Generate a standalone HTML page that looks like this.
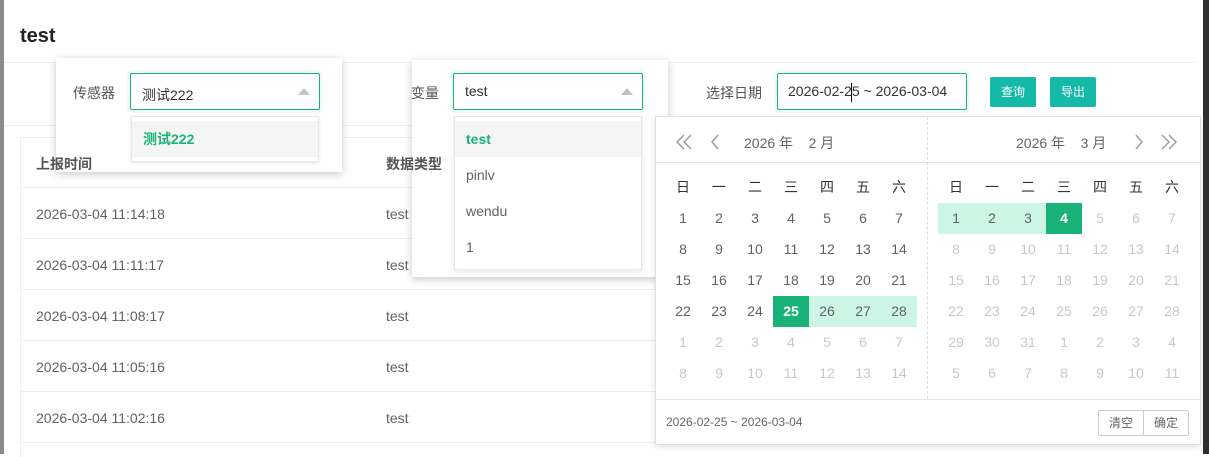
<!DOCTYPE html>
<html><head><meta charset="utf-8"><style>
*{box-sizing:border-box;margin:0;padding:0}
body{width:1209px;height:454px;overflow:hidden;background:#fff;font-family:"Liberation Sans","Noto Sans CJK SC",sans-serif;color:#606266;position:relative}
.a{position:absolute}
.t{font-size:14px;color:#606266;white-space:nowrap}
.shadow{background:#fff;box-shadow:0 2px 8px rgba(0,0,0,.22)}
.inp{border:1px solid #19b37a;background:#fff;box-shadow:0 0 0 3px #eefaf4;border-radius:2px}
.tri{position:absolute;width:0;height:0;border-left:6px solid transparent;border-right:6px solid transparent;border-bottom:7px solid #c0c4cc}
.dd{background:#fff;border:1px solid #e8e8e8;box-shadow:0 1px 4px rgba(0,0,0,.1)}
.it{position:absolute;left:0;right:0;height:36px;line-height:36px;padding-left:11px;font-size:14px;color:#606266}
.g{position:absolute;display:grid;grid-template-columns:repeat(7,36px);grid-auto-rows:31px;font-size:14px;text-align:center;line-height:31px}
.g span{color:#606266}
.g .o{color:#c8c8c8}
.g .h{color:#333}
.g .r{background:#cdf5e5}
.g .s{background:#19b37a;color:#fff;font-weight:bold}
.btn{position:absolute;background:#15b9a8;color:#fff;font-size:12px;border-radius:2px;text-align:center;line-height:30px;height:30px;width:46px}
.row{position:absolute;left:20px;width:1180px;border-bottom:1px solid #ebeef5;height:51px}
</style></head><body>
<div class="a" style="left:0;top:0;width:4px;height:454px;background:#8a8a8a"></div>
<div class="a" style="left:1203px;top:0;width:6px;height:454px;background:#2f2f2f"></div>
<div class="a" style="left:20px;top:25px;font-size:20px;font-weight:bold;color:#222">test</div>
<div class="a" style="left:4px;top:62px;width:1192px;height:64px;border-top:1px solid #f0f0f0;border-bottom:1px solid #f0f0f0"></div>
<!-- table -->
<div class="a" style="left:20px;top:137px;width:1180px;height:320px;border-left:1px solid #ebeef5;border-top:1px solid #ebeef5"></div>
<div class="row" style="top:137px"></div>
<div class="row" style="top:188px"></div>
<div class="row" style="top:239px"></div>
<div class="row" style="top:290px"></div>
<div class="row" style="top:341px"></div>
<div class="row" style="top:392px"></div>
<div class="a t" style="left:36px;top:206px">2026-03-04 11:14:18</div><div class="a t" style="left:386px;top:206px">test</div>
<div class="a t" style="left:36px;top:257px">2026-03-04 11:11:17</div><div class="a t" style="left:386px;top:257px">test</div>
<div class="a t" style="left:36px;top:308px">2026-03-04 11:08:17</div><div class="a t" style="left:386px;top:308px">test</div>
<div class="a t" style="left:36px;top:359px">2026-03-04 11:05:16</div><div class="a t" style="left:386px;top:359px">test</div>
<div class="a t" style="left:36px;top:410px">2026-03-04 11:02:16</div><div class="a t" style="left:386px;top:410px">test</div>
<!-- sensor popup -->
<div class="a shadow" style="left:56px;top:58px;width:286px;height:114px"></div>
<div class="a t" style="left:73px;top:83px;color:#555">传感器</div>
<div class="a inp" style="left:130px;top:73px;width:190px;height:37px"><div class="a t" style="left:11px;top:11px;color:#333">测试222</div><div class="tri" style="left:167px;top:14px"></div></div>
<div class="a dd" style="left:131px;top:116px;width:188px;height:46px"><div class="it" style="top:4px;background:#f5f5f5;color:#19b37a;font-weight:bold">测试222</div></div>
<!-- variable popup -->
<div class="a shadow" style="left:412px;top:60px;width:256px;height:217px"></div>
<div class="a t" style="left:411px;top:83px;color:#555">变量</div>
<div class="a inp" style="left:453px;top:73px;width:190px;height:37px"><div class="a t" style="left:11px;top:9px;color:#333">test</div><div class="tri" style="left:167px;top:14px"></div></div>
<div class="a dd" style="left:454px;top:116px;width:188px;height:154px">
<div class="it" style="top:4px;background:#f5f5f5;color:#19b37a;font-weight:bold">test</div>
<div class="it" style="top:40px">pinlv</div>
<div class="it" style="top:76px">wendu</div>
<div class="it" style="top:112px">1</div></div>
<!-- headers drawn over popups -->
<div class="a t" style="left:36px;top:154px;font-weight:bold;color:#555;z-index:5">上报时间</div>
<div class="a t" style="left:386px;top:154px;font-weight:bold;color:#555;z-index:5">数据类型</div>
<!-- date -->
<div class="a t" style="left:706px;top:83px;color:#555">选择日期</div>
<div class="a inp" style="left:777px;top:73px;width:190px;height:37px"><div class="a t" style="left:10px;top:9px;color:#333">2026-02-25 ~ 2026-03-04</div><div class="a" style="left:73px;top:9px;width:1px;height:19px;background:#000"></div></div>
<div class="btn" style="left:990px;top:77px">查询</div>
<div class="btn" style="left:1050px;top:77px">导出</div>
<!-- calendar -->
<div class="a" style="left:655px;top:116px;width:546px;height:329px;background:#fff;border:1px solid #e0e0e0;box-shadow:0 2px 6px rgba(0,0,0,.12)"></div>
<div class="a" style="left:656px;top:162px;width:544px;height:1px;background:#e4e4e4"></div>
<div class="a" style="left:927px;top:117px;height:282px;border-left:1px dashed #ddd"></div>
<div class="a" style="left:656px;top:399px;width:544px;height:1px;background:#e4e4e4"></div>
<svg class="a" style="left:674px;top:132px" width="60" height="20" viewBox="0 0 60 20" fill="none" stroke="#999" stroke-width="1.4"><path d="M10 3l-7 7 7 7M17 3l-7 7 7 7M44 3l-6 7 6 7"/></svg>
<div class="a t" style="left:744px;top:133px;color:#666">2026 年&nbsp;&nbsp;&nbsp;&nbsp;2 月</div>
<div class="a t" style="left:1016px;top:133px;color:#666">2026 年&nbsp;&nbsp;&nbsp;&nbsp;3 月</div>
<svg class="a" style="left:1130px;top:132px" width="50" height="20" viewBox="0 0 50 20" fill="none" stroke="#999" stroke-width="1.4"><path d="M6 3l6 7-6 7M32 3l7 7-7 7M39 3l7 7-7 7"/></svg>
<div class="g" style="left:665px;top:172px">
<span class="h">日</span><span class="h">一</span><span class="h">二</span><span class="h">三</span><span class="h">四</span><span class="h">五</span><span class="h">六</span>
<span>1</span><span>2</span><span>3</span><span>4</span><span>5</span><span>6</span><span>7</span>
<span>8</span><span>9</span><span>10</span><span>11</span><span>12</span><span>13</span><span>14</span>
<span>15</span><span>16</span><span>17</span><span>18</span><span>19</span><span>20</span><span>21</span>
<span>22</span><span>23</span><span>24</span><span class="s">25</span><span class="r">26</span><span class="r">27</span><span class="r">28</span>
<span class="o">1</span><span class="o">2</span><span class="o">3</span><span class="o">4</span><span class="o">5</span><span class="o">6</span><span class="o">7</span>
<span class="o">8</span><span class="o">9</span><span class="o">10</span><span class="o">11</span><span class="o">12</span><span class="o">13</span><span class="o">14</span>
</div>
<div class="g" style="left:938px;top:172px">
<span class="h">日</span><span class="h">一</span><span class="h">二</span><span class="h">三</span><span class="h">四</span><span class="h">五</span><span class="h">六</span>
<span class="r">1</span><span class="r">2</span><span class="r">3</span><span class="s">4</span><span class="o">5</span><span class="o">6</span><span class="o">7</span>
<span class="o">8</span><span class="o">9</span><span class="o">10</span><span class="o">11</span><span class="o">12</span><span class="o">13</span><span class="o">14</span>
<span class="o">15</span><span class="o">16</span><span class="o">17</span><span class="o">18</span><span class="o">19</span><span class="o">20</span><span class="o">21</span>
<span class="o">22</span><span class="o">23</span><span class="o">24</span><span class="o">25</span><span class="o">26</span><span class="o">27</span><span class="o">28</span>
<span class="o">29</span><span class="o">30</span><span class="o">31</span><span class="o">1</span><span class="o">2</span><span class="o">3</span><span class="o">4</span>
<span class="o">5</span><span class="o">6</span><span class="o">7</span><span class="o">8</span><span class="o">9</span><span class="o">10</span><span class="o">11</span>
</div>
<div class="a" style="left:666px;top:415px;font-size:12px;color:#666">2026-02-25 ~ 2026-03-04</div>
<div class="a" style="left:1098px;top:410px;width:91px;height:26px;border:1px solid #ccc;border-radius:2px;font-size:12px;color:#666;display:flex">
<div style="width:45px;text-align:center;line-height:24px;border-right:1px solid #ccc">清空</div><div style="flex:1;text-align:center;line-height:24px">确定</div></div>
</body></html>
